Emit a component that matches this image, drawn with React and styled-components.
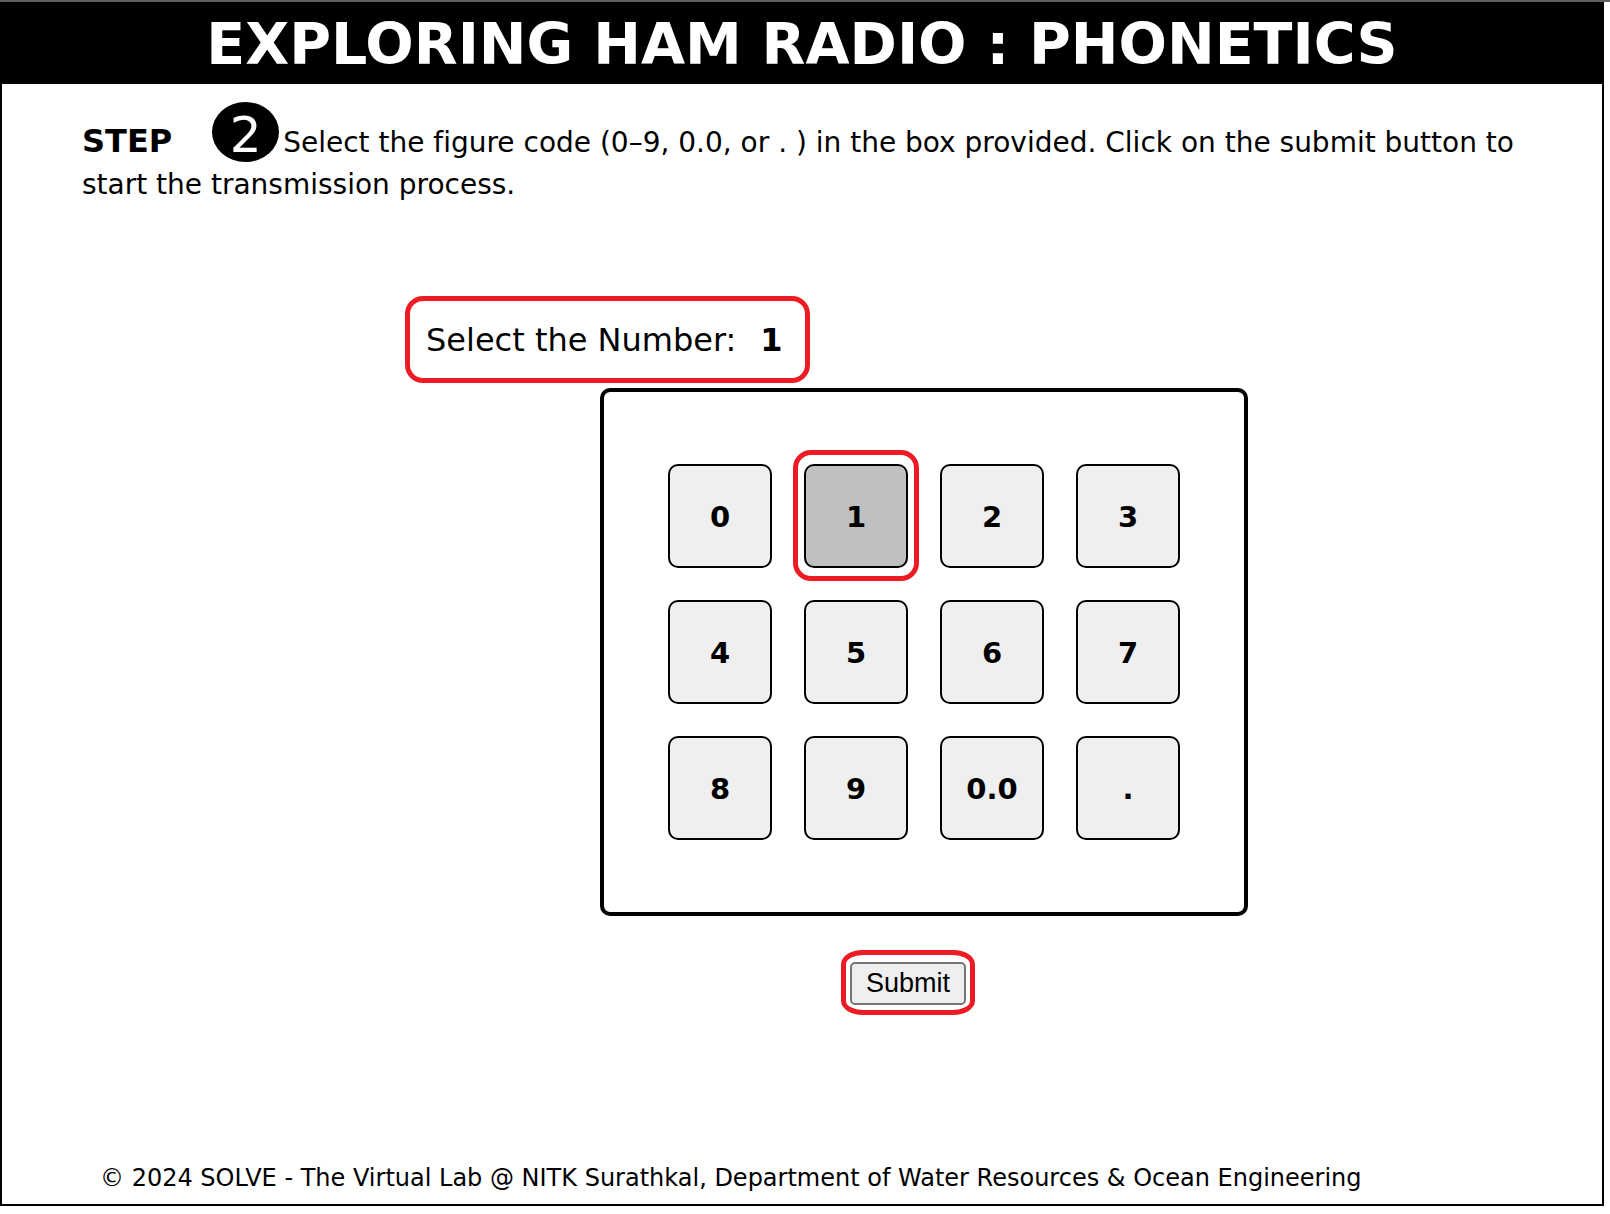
import React, { useState } from "react";
import styled, { createGlobalStyle, css } from "styled-components";

const RED = "#ed1c24";

const GlobalStyle = createGlobalStyle`
  *, *::before, *::after { box-sizing: border-box; }
  body {
    margin: 0;
    background: #fff;
    color: #000;
    font-family: Verdana, "DejaVu Sans", sans-serif;
    font-variant-ligatures: none;
  }
`;

const Page = styled.div`
  border-top: 2px solid #606060;
  padding-right: 6px;
`;

const Frame = styled.div`
  display: flex;
  flex-direction: column;
  min-height: calc(100vh - 10px);
  border: 2px solid #000;
`;

const Header = styled.header`
  background: #000;
  color: #fff;
`;

const Title = styled.h1`
  margin: 0;
  font-size: 57px;
  line-height: 80px;
  font-weight: bold;
  text-align: center;
`;

const Main = styled.main`
  flex: 1;
`;

const Instruction = styled.p`
  margin: 0;
  padding: 18px 56px 0 80px;
  font-size: 28px;
  line-height: 42px;
`;

const StepLabel = styled.strong`
  font-size: 32px;
  margin-right: 40px;
`;

const StepNumber = styled.span`
  display: inline-flex;
  justify-content: center;
  width: 67px;
  height: 60px;
  margin-right: 4px;
  border-radius: 50%;
  background: #000;
  color: #fff;
  font-size: 50px;
  line-height: 66px;
`;

const Stage = styled.section`
  display: flex;
  flex-direction: column;
  align-items: flex-start;
  width: fit-content;
  margin: 90px auto 0;
  padding-left: 49px;
`;

const Readout = styled.div`
  display: flex;
  align-items: center;
  gap: 24px;
  height: 87px;
  padding: 0 22px 0 16px;
  border: 5px solid ${RED};
  border-radius: 18px;
  font-size: 32px;
`;

const Chosen = styled.output`
  font-size: 32px;
  font-weight: bold;
`;

const Keypad = styled.div`
  display: grid;
  grid-template-columns: repeat(4, 104px);
  gap: 32px;
  margin: 5px 0 0 195px;
  padding: 72px 64px;
  border: 4px solid #000;
  border-radius: 10px;
`;

const ring = css`
  &::after {
    content: "";
    position: absolute;
    border: 5px solid ${RED};
    pointer-events: none;
  }
`;

const Key = styled.button`
  position: relative;
  height: 104px;
  padding: 2px 0 0;
  border: 2px solid #000;
  border-radius: 10px;
  background: ${(p) => (p.$selected ? "#c0c0c0" : "#efefef")};
  color: #000;
  font-family: inherit;
  font-size: 29px;
  font-weight: bold;
  cursor: pointer;

  ${(p) =>
    p.$selected &&
    css`
      ${ring}
      &::after {
        inset: -16px -13px -15px -13px;
        border-radius: 18px;
      }
    `}
`;

const SubmitRow = styled.div`
  position: relative;
  margin: 46px 0 0 445px;

  ${ring}
  &::after {
    inset: -12px -9px -10px -9px;
    border-radius: 22px / 14px;
  }
`;

const SubmitButton = styled.button`
  display: block;
  height: 43px;
  padding: 0 14px;
  border: 2px solid #767676;
  border-radius: 5px;
  background: #efefef;
  color: #000;
  font-family: Arial, "Liberation Sans", sans-serif;
  font-size: 27px;
  cursor: pointer;
`;

const Footer = styled.footer`
  padding: 0 98px 10px;
  font-size: 24px;
  line-height: 32px;
`;

const CODES = ["0", "1", "2", "3", "4", "5", "6", "7", "8", "9", "0.0", "."];

export default function App() {
  const [selected, setSelected] = useState("1");

  return (
    <>
      <GlobalStyle />
      <Page>
        <Frame>
          <Header>
            <Title>EXPLORING HAM RADIO : PHONETICS</Title>
          </Header>
          <Main>
            <Instruction>
              <StepLabel>STEP</StepLabel>
              <StepNumber>2</StepNumber>
              Select the figure code (0–9, 0.0, or . ) in the box provided. Click
              on the submit button to start the transmission process.
            </Instruction>
            <Stage>
              <Readout>
                <span id="readout-label">Select the Number:</span>
                <Chosen aria-labelledby="readout-label">{selected}</Chosen>
              </Readout>
              <Keypad role="group" aria-labelledby="readout-label">
                {CODES.map((code) => (
                  <Key
                    key={code}
                    type="button"
                    $selected={code === selected}
                    aria-pressed={code === selected}
                    onClick={() => setSelected(code)}
                  >
                    {code}
                  </Key>
                ))}
              </Keypad>
              <SubmitRow>
                <SubmitButton type="button">Submit</SubmitButton>
              </SubmitRow>
            </Stage>
          </Main>
          <Footer>
            © 2024 SOLVE - The Virtual Lab @ NITK Surathkal, Department of Water
            Resources &amp; Ocean Engineering
          </Footer>
        </Frame>
      </Page>
    </>
  );
}
